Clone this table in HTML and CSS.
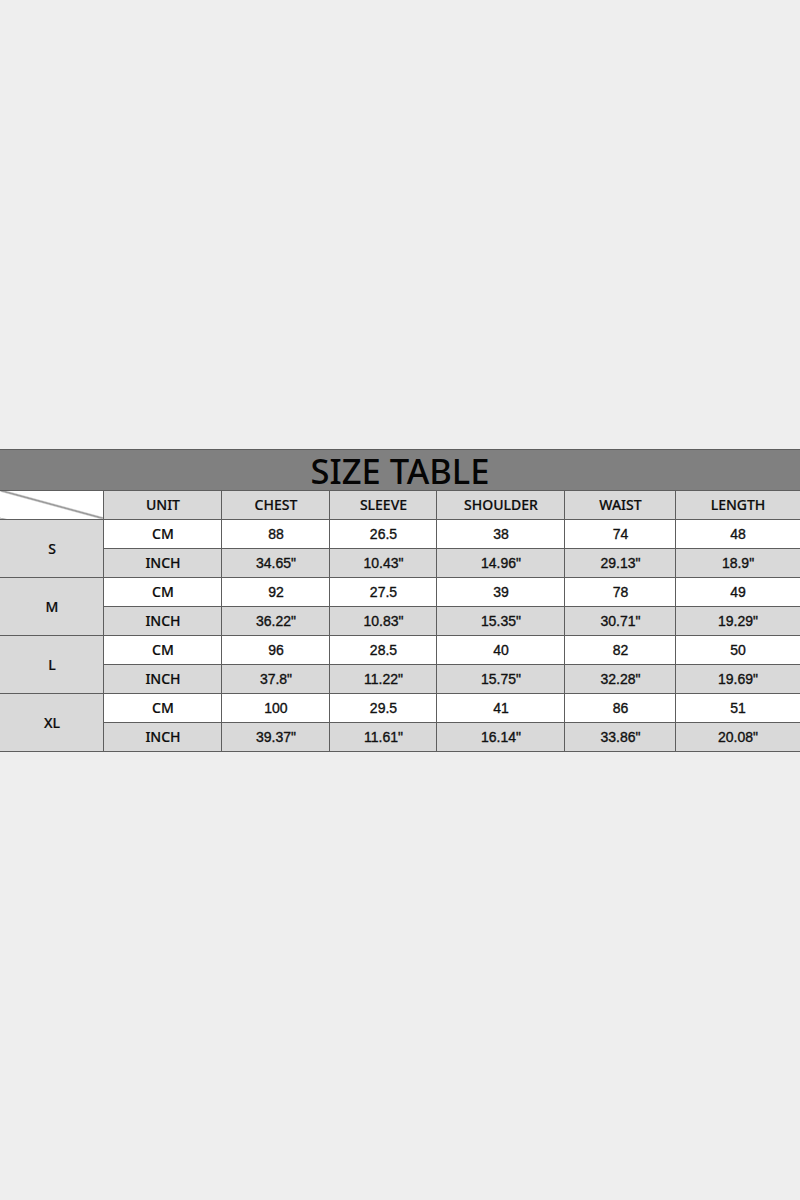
FILE: index.html
```html
<!DOCTYPE html>
<html>
<head>
<meta charset="utf-8">
<link rel="stylesheet" href="styles.css">
</head>
<body>
<main class="page">
  <table class="size-table">
    <colgroup>
      <col class="c-size"><col class="c-unit"><col class="c-chest"><col class="c-sleeve"><col class="c-shoulder"><col class="c-waist"><col class="c-length">
    </colgroup>
    <tr class="title-row"><th colspan="7" class="title">SIZE TABLE</th></tr>
    <tr class="head-row">
      <th class="corner"></th>
      <th class="gray">UNIT</th><th class="gray">CHEST</th><th class="gray">SLEEVE</th><th class="gray">SHOULDER</th><th class="gray">WAIST</th><th class="gray">LENGTH</th>
    </tr>
    <tr><th rowspan="2" class="size gray">S</th><th class="unit">CM</th><td>88</td><td>26.5</td><td>38</td><td>74</td><td>48</td></tr>
    <tr class="inch"><th class="unit">INCH</th><td>34.65"</td><td>10.43"</td><td>14.96"</td><td>29.13"</td><td>18.9"</td></tr>
    <tr><th rowspan="2" class="size gray">M</th><th class="unit">CM</th><td>92</td><td>27.5</td><td>39</td><td>78</td><td>49</td></tr>
    <tr class="inch"><th class="unit">INCH</th><td>36.22"</td><td>10.83"</td><td>15.35"</td><td>30.71"</td><td>19.29"</td></tr>
    <tr><th rowspan="2" class="size gray">L</th><th class="unit">CM</th><td>96</td><td>28.5</td><td>40</td><td>82</td><td>50</td></tr>
    <tr class="inch"><th class="unit">INCH</th><td>37.8"</td><td>11.22"</td><td>15.75"</td><td>32.28"</td><td>19.69"</td></tr>
    <tr><th rowspan="2" class="size gray">XL</th><th class="unit">CM</th><td>100</td><td>29.5</td><td>41</td><td>86</td><td>51</td></tr>
    <tr class="inch"><th class="unit">INCH</th><td>39.37"</td><td>11.61"</td><td>16.14"</td><td>33.86"</td><td>20.08"</td></tr>
  </table>
</main>
</body>
</html>
```
FILE: styles.css
```css
html, body {
  margin: 0;
  padding: 0;
  background: #eeeeee;
}
.page {
  min-height: 1200px;
  display: flex;
  align-items: center;
  justify-content: center;
}
.size-table {
  width: 800px;
  table-layout: fixed;
  border-collapse: collapse;
  color: #111;
  background: #fff;
}
.c-size { width: 104px; }
.c-unit { width: 118px; }
.c-chest { width: 108px; }
.c-sleeve { width: 107px; }
.c-shoulder { width: 128px; }
.c-waist { width: 111px; }
.c-length { width: 124px; }

.size-table th, .size-table td {
  border: 1px solid #5e5e5e;
  padding: 0;
  height: 29px;
  text-align: center;
  vertical-align: middle;
  box-sizing: border-box;
}
.size-table th {
  font-family: "Noto Sans", sans-serif;
  font-size: 14px;
  font-weight: 500;
  color: #0c0c0c;
  -webkit-text-stroke: 0.2px #0c0c0c;
}
.size-table td {
  font-family: "Liberation Sans", Arial, sans-serif;
  font-size: 14px;
  font-weight: normal;
  color: #111;
  -webkit-text-stroke: 0.35px #111;
}
.title-row .title {
  background: #808080;
  height: 40px;
  font-family: "Noto Sans", "Noto Sans CJK SC", sans-serif;
  font-size: 34.5px;
  font-weight: 500;
  line-height: 38px;
  color: #050505;
  padding: 2px 0 0 0;
  -webkit-text-stroke: 0;
}
.gray, .inch td, .inch th {
  background: #d9d9d9;
}
.corner {
  background: linear-gradient(to top right, #fff calc(50% - 1.2px), #5a5a5a 50%, #fff calc(50% + 1.2px));
}
```
